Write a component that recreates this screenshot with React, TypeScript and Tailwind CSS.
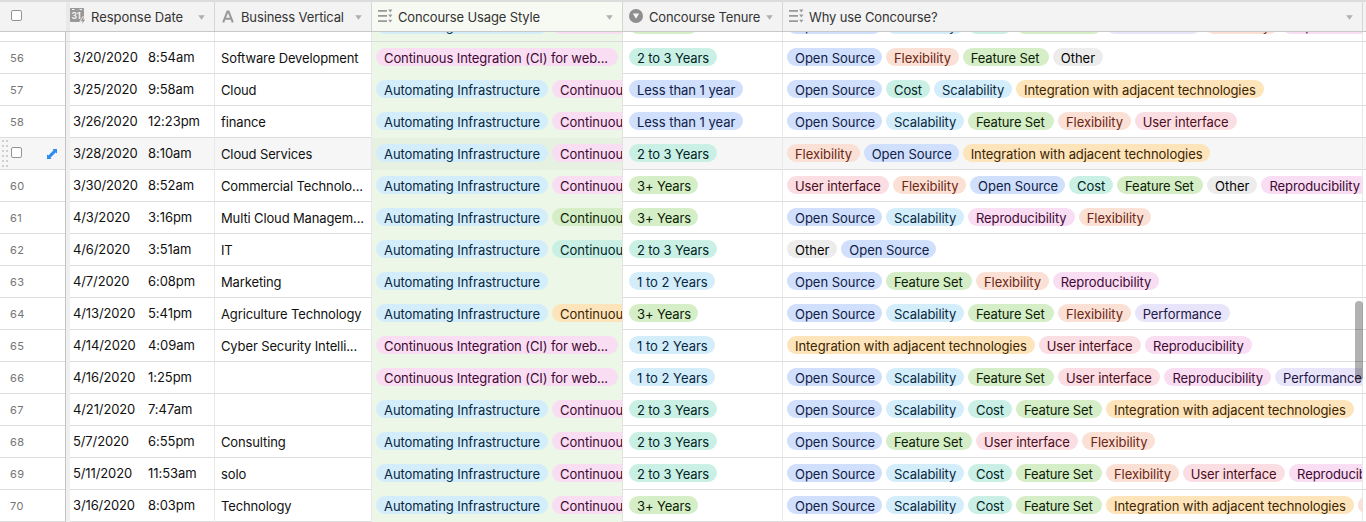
import React from "react";

type Tone = "blue" | "peach" | "green" | "gray" | "teal" | "cyan" | "orange" | "red" | "pink" | "purple";

const tones: Record<Tone, string> = {
  blue: "bg-[#cfdffc] text-[#102046]",
  peach: "bg-[#fbe0d6] text-[#6b2613]",
  green: "bg-[#d5eec7] text-[#0b1d05]",
  gray: "bg-[#ececec] text-[#040404]",
  teal: "bg-[#caf0e6] text-[#012524]",
  cyan: "bg-[#d4edfa] text-[#04283f]",
  orange: "bg-[#fee4bb] text-[#3b2501]",
  red: "bg-[#fbdee3] text-[#4c0c1c]",
  pink: "bg-[#f8ddf3] text-[#400832]",
  purple: "bg-[#e8e5fb] text-[#231543]",
};

type Tag = { label: string; tone: Tone; width: string };

const tags: Record<string, Tag> = {
  open: { label: "Open Source", tone: "blue", width: "w-[95px] tracking-[-0.02px]" },
  flex: { label: "Flexibility", tone: "peach", width: "w-[72.7px] tracking-[-0.05px]" },
  feat: { label: "Feature Set", tone: "green", width: "w-[86px] tracking-[-0.15px]" },
  other: { label: "Other", tone: "gray", width: "w-[50.3px]" },
  cost: { label: "Cost", tone: "teal", width: "w-[44px] tracking-[-0.1px]" },
  scal: { label: "Scalability", tone: "cyan", width: "w-[78px] tracking-[-0.05px]" },
  integ: { label: "Integration with adjacent technologies", tone: "orange", width: "w-[247.7px] tracking-[-0.06px]" },
  ui: { label: "User interface", tone: "red", width: "w-[102.4px] tracking-[-0.1px]" },
  repro: { label: "Reproducibility", tone: "pink", width: "w-[106.7px] tracking-[-0.07px]" },
  perf: { label: "Performance", tone: "purple", width: "w-[95px] tracking-[-0.08px]" },
  auto: { label: "Automating Infrastructure", tone: "cyan", width: "w-[172px] tracking-[-0.06px]" },
  web: { label: "Continuous Integration (CI) for web...", tone: "pink", width: "w-[242px] tracking-[-0.09px]" },
  contPink: { label: "Continuous", tone: "pink", width: "w-[100px]" },
  contGreen: { label: "Continuous", tone: "green", width: "w-[100px]" },
  contTeal: { label: "Continuous", tone: "teal", width: "w-[100px]" },
  contOrange: { label: "Continuous", tone: "orange", width: "w-[100px]" },
  y0: { label: "Less than 1 year", tone: "blue", width: "w-[114px] tracking-[-0.03px]" },
  y1: { label: "1 to 2 Years", tone: "cyan", width: "w-[86px]" },
  y2: { label: "2 to 3 Years", tone: "teal", width: "w-[88px] tracking-[-0.12px]" },
  y3: { label: "3+ Years", tone: "green", width: "w-[69px] tracking-[-0.1px]" },
};

type Row = { n: number; date: string; time: string; vertical: string; usage: string; tenure: string; why: string };

const rows: Row[] = [
  { n: 55, date: "", time: "", vertical: "", usage: "auto contPink", tenure: "y3", why: "open scal cost feat perf flex repro" },
  { n: 56, date: "3/20/2020", time: "8:54am", vertical: "Software Development", usage: "web", tenure: "y2", why: "open flex feat other" },
  { n: 57, date: "3/25/2020", time: "9:58am", vertical: "Cloud", usage: "auto contPink", tenure: "y0", why: "open cost scal integ" },
  { n: 58, date: "3/26/2020", time: "12:23pm", vertical: "finance", usage: "auto contPink", tenure: "y0", why: "open scal feat flex ui" },
  { n: 59, date: "3/28/2020", time: "8:10am", vertical: "Cloud Services", usage: "auto contPink", tenure: "y2", why: "flex open integ" },
  { n: 60, date: "3/30/2020", time: "8:52am", vertical: "Commercial Technolo...", usage: "auto contPink", tenure: "y3", why: "ui flex open cost feat other repro" },
  { n: 61, date: "4/3/2020", time: "3:16pm", vertical: "Multi Cloud Managem...", usage: "auto contGreen", tenure: "y3", why: "open scal repro flex" },
  { n: 62, date: "4/6/2020", time: "3:51am", vertical: "IT", usage: "auto contTeal", tenure: "y2", why: "other open" },
  { n: 63, date: "4/7/2020", time: "6:08pm", vertical: "Marketing", usage: "auto", tenure: "y1", why: "open feat flex repro" },
  { n: 64, date: "4/13/2020", time: "5:41pm", vertical: "Agriculture Technology", usage: "auto contOrange", tenure: "y3", why: "open scal feat flex perf" },
  { n: 65, date: "4/14/2020", time: "4:09am", vertical: "Cyber Security Intelli...", usage: "web", tenure: "y1", why: "integ ui repro" },
  { n: 66, date: "4/16/2020", time: "1:25pm", vertical: "", usage: "web", tenure: "y1", why: "open scal feat ui repro perf" },
  { n: 67, date: "4/21/2020", time: "7:47am", vertical: "", usage: "auto contPink", tenure: "y2", why: "open scal cost feat integ" },
  { n: 68, date: "5/7/2020", time: "6:55pm", vertical: "Consulting", usage: "auto contPink", tenure: "y2", why: "open feat ui flex" },
  { n: 69, date: "5/11/2020", time: "11:53am", vertical: "solo", usage: "auto contPink", tenure: "y2", why: "open scal cost feat flex ui repro" },
  { n: 70, date: "3/16/2020", time: "8:03pm", vertical: "Technology", usage: "auto contPink", tenure: "y3", why: "open scal cost feat integ flex" },
];

function Chips({ ids }: { ids: string }) {
  return (
    <div className="flex gap-1 pt-1.5">
      {ids.split(" ").map((id) => {
        const t = tags[id];
        return (
          <span key={id} className={`h-[18px] shrink-0 rounded-full pl-2 leading-5 ${t.width} ${tones[t.tone]}`}>
            {t.label}
          </span>
        );
      })}
    </div>
  );
}

function Caret() {
  return (
    <svg className="mt-px ml-auto shrink-0" width="7" height="5" viewBox="0 0 7 5">
      <path d="M.2 .2h6.600L3.500 4.800z" fill="#b0b0b0" />
    </svg>
  );
}

function MultiIcon() {
  return (
    <svg className="shrink-0" width="15" height="14" viewBox="0 0 15 14" fill="#999">
      <path d="M0 1h9v1.800H0zM0 6h9v1.800H0zM0 11.200h9V13H0zM10.200 .5h4.200L12.300 3.400zM10.200 5.500h4.200L12.300 8.400zM10.200 10.700h4.200L12.300 13.600z" />
    </svg>
  );
}

function DateIcon() {
  return (
    <svg className="shrink-0" width="16" height="16" viewBox="0 0 16 16">
      <path d="M.8 0h12.400a.8 .8 0 0 1 .8 .8V14H.8a.8 .8 0 0 1-.8-.8V.8A.8 .8 0 0 1 .8 0z" fill="#999" />
      <path d="M2 1.500h2.500M9.500 1.500H12" stroke="#f3f3f3" />
      <text x="1.600" y="11" fontSize="8.500" fontWeight="700" fontFamily="Inter, sans-serif" fill="#f3f3f3">31</text>
      <path d="M13 9.300l-2.300 3.700h1.900l-.7 2.700 3.400-4h-2l.7-2.400z" fill="#999" stroke="#f3f3f3" strokeWidth="1.600" paintOrder="stroke" />
    </svg>
  );
}

function TextIcon() {
  return (
    <svg className="shrink-0" width="12" height="13" viewBox="0 0 12 13" fill="none" stroke="#999" strokeWidth="2">
      <path d="M1.200 12.300L5.400 1.600h1.200L10.800 12.300M2.800 8.800h6.400" />
    </svg>
  );
}

function SelectIcon() {
  return (
    <svg className="shrink-0" width="14" height="14" viewBox="0 0 14 14">
      <circle cx="7" cy="7" r="7" fill="#8e8e8e" />
      <path d="M3.800 4.600h6.400L7 9.800z" fill="#f5f5f5" />
    </svg>
  );
}

function CheckBox() {
  return <div className="size-[11px] shrink-0 rounded-[2px] border border-[#949494] bg-white" />;
}

function Handle() {
  return (
    <svg className="shrink-0" width="7" height="27" viewBox="0 0 7 27" fill="#cfcfcf">
      {[0, 5, 10, 15, 20, 25].map((y) => (
        <path key={y} d={`M0 ${y}h2v2H0zM4 ${y}h2v2H4z`} />
      ))}
    </svg>
  );
}

function ExpandIcon() {
  return (
    <svg className="shrink-0" width="10" height="10" viewBox="0 0 10 10">
      <path d="M5.500 0H10v4.500L8.700 3.400 3.400 8.700 4.500 10H0V5.500l1.300 1.100L6.600 1.300z" fill="#2d8cf0" />
    </svg>
  );
}

export default function App() {
  const grid = "grid grid-cols-[66px_149px_157px_251px_160px_580px_3px]";
  return (
    <div className="relative flex h-[522px] w-[1366px] flex-col overflow-hidden bg-white font-['Inter',sans-serif] text-[13px] whitespace-nowrap text-[#1b1b1b]">
      <header className={`${grid} h-8 shrink-0 border-t-2 border-b border-t-[#dcdcdc] border-b-[#c8c8c8] bg-[#f3f3f3] tracking-[-0.14px] text-[#333]`}>
        <div className="flex pt-2 pl-[11px]"><CheckBox /></div>
        <div className="flex items-center border-r border-[#d5d5d5] pr-[9px] shadow-[inset_4px_0_0_#e9e9e9]">
          <div className="flex w-[25px] pb-px pl-1"><DateIcon /></div>
          <span className="pt-[3px] tracking-[-0.04px]">Response Date</span>
          <Caret />
        </div>
        <div className="flex items-center border-r border-[#d5d5d5] pr-[9px] pl-[7px]">
          <div className="w-[19px] pb-px"><TextIcon /></div>
          <span className="pt-[3px]">Business Vertical</span>
          <Caret />
        </div>
        <div className="flex items-center border-r border-[#d5d5d5] bg-[#f7faf2] pr-[9px] pl-1.5">
          <div className="w-5 pb-px"><MultiIcon /></div>
          <span className="pt-[3px]">Concourse Usage Style</span>
          <Caret />
        </div>
        <div className="flex items-center border-r border-[#d5d5d5] pr-[9px] pl-1.5">
          <div className="w-5 pb-px"><SelectIcon /></div>
          <span className="pt-[3px]">Concourse Tenure</span>
          <Caret />
        </div>
        <div className="flex items-center border-r border-[#d5d5d5] pr-[9px] pl-1.5">
          <div className="w-5 pb-px"><MultiIcon /></div>
          <span className="pt-[3px]">Why use Concourse?</span>
          <Caret />
        </div>
        <div />
      </header>
      <main className="min-h-0 flex-1 overflow-hidden">
        <div className="-mt-[22px]">
          {rows.map((r) => {
            const active = r.n === 59;
            return (
              <div key={r.n} className={`${grid} h-8 border-b border-[#dcdcdc] ${active ? "bg-[#f6f6f6]" : "bg-white"}`}>
                <div className="flex border-r border-[#c4c4c4]">
                  {active ? (
                    <div className="flex flex-1 pl-0.5">
                      <div className="w-[9px] pt-0.5"><Handle /></div>
                      <div className="w-9 pt-[9px]"><CheckBox /></div>
                      <div className="pt-[11px]"><ExpandIcon /></div>
                    </div>
                  ) : (
                    <span className="pl-2.5 text-[11px] leading-8 tracking-[0.4px] text-[#757575]">{r.n > 55 ? r.n : ""}</span>
                  )}
                </div>
                <div className="flex border-r border-[#e8e8e8] pl-[7px] leading-[31px] text-[#111] shadow-[inset_4px_0_0_#f0f0f0]">
                  <span className="w-[75px] tracking-[-0.12px]">{r.date}</span>
                  <span className="tracking-[-0.05px]">{r.time}</span>
                </div>
                <div className="border-r border-[#e8e8e8] pl-1.5 leading-[33px] tracking-[-0.13px] text-[#111]">{r.vertical}</div>
                <div className={`overflow-hidden border-r border-[#e0e4dc] pl-1 ${active ? "bg-[#e7f1e1]" : "bg-[#edf7e8]"}`}><Chips ids={r.usage} /></div>
                <div className="border-r border-[#e8e8e8] pl-1.5"><Chips ids={r.tenure} /></div>
                <div className="overflow-hidden border-r border-[#e8e8e8] pl-1"><Chips ids={r.why} /></div>
                <div />
              </div>
            );
          })}
        </div>
      </main>
      <div className="absolute top-[301px] left-[1355px] h-[80px] w-2 rounded-full bg-black/30" />
    </div>
  );
}
